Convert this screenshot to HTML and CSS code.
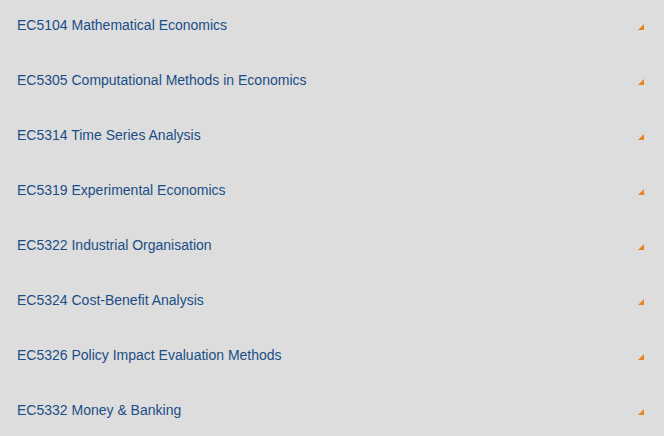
FILE: index.html
```html
<!DOCTYPE html>
<html lang="en">
<head>
  <meta charset="UTF-8" />
  <title>Modules</title>
  <link rel="stylesheet" href="styles.css">
</head>
<body>

<ul class="module-list">
  <li class="module-row"><a href="#">EC5104 Mathematical Economics</a><span class="toggle"></span></li>
  <li class="module-row"><a href="#">EC5305 Computational Methods in Economics</a><span class="toggle"></span></li>
  <li class="module-row"><a href="#">EC5314 Time Series Analysis</a><span class="toggle"></span></li>
  <li class="module-row"><a href="#">EC5319 Experimental Economics</a><span class="toggle"></span></li>
  <li class="module-row"><a href="#">EC5322 Industrial Organisation</a><span class="toggle"></span></li>
  <li class="module-row"><a href="#">EC5324 Cost-Benefit Analysis</a><span class="toggle"></span></li>
  <li class="module-row"><a href="#">EC5326 Policy Impact Evaluation Methods</a><span class="toggle"></span></li>
  <li class="module-row"><a href="#">EC5332 Money &amp; Banking</a><span class="toggle"></span></li>
</ul>

</body>
</html>
```

FILE: styles.css
```css
body {
  font-family: "Liberation Sans", Arial, sans-serif;
  background-color: #dddddd;
  margin: 0;
}

.module-list {
  list-style: none;
  margin: 0;
  padding: 0;
}

.module-row {
  display: flex;
  align-items: center;
  justify-content: space-between;
  height: 55px;
  padding: 0 20px 4px 17px;
  box-sizing: border-box;
}

.module-row a {
  color: #1b4d86;
  text-decoration: none;
  font-size: 14px;
  line-height: 17px;
}

.toggle {
  width: 0;
  height: 0;
  border-left: 6px solid transparent;
  border-bottom: 6px solid #e8821e;
  margin-top: 3px;
}
```
